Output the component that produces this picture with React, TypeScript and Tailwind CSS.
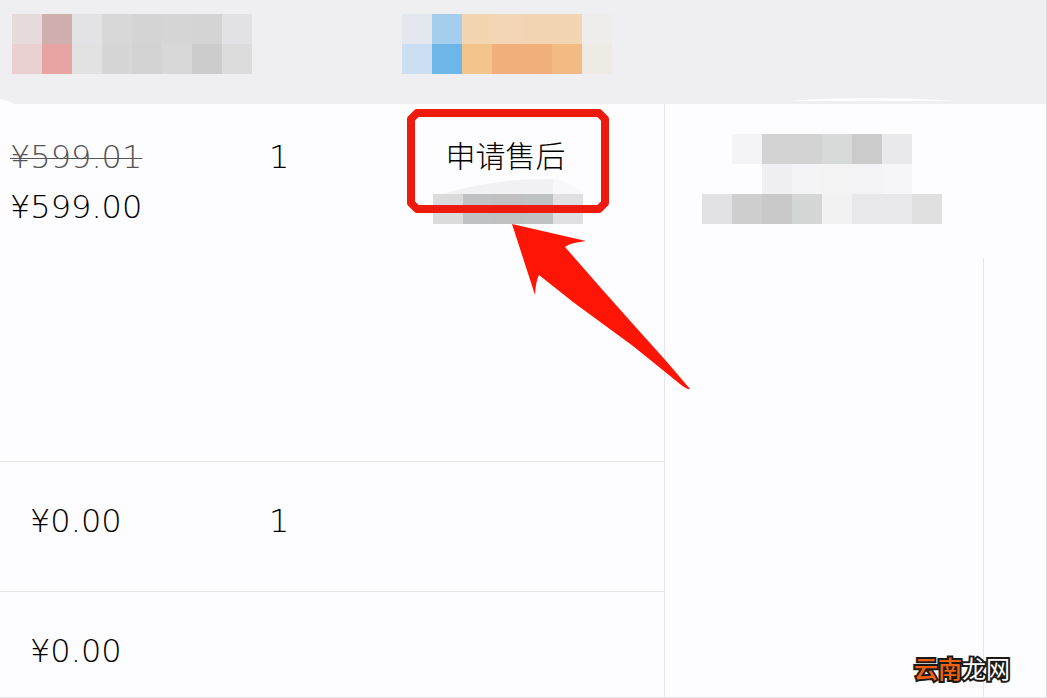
import clsx from "clsx";

// one entry per 30px tile, an empty string leaves a gap
const productTiles = [
  ["bg-[#e6dadb]", "bg-[#cfb0ae]", "bg-[#e3e2e4]", "bg-[#d8d8d9]", "bg-[#d4d4d5]", "bg-[#d6d6d7]", "bg-[#d4d4d5]", "bg-[#e2e2e4]"],
  ["bg-[#ebd0d2]", "bg-[#e7a4a2]", "bg-[#e2e2e3]", "bg-[#d6d6d7]", "bg-[#d3d3d4]", "bg-[#d8d8d9]", "bg-[#cdcccd]", "bg-[#dcdcdd]"],
];

const shopTiles = [
  ["bg-[#e5e7ef]", "bg-[#a4ceed]", "bg-[#f3d5b1]", "bg-[#f3d6b5]", "bg-[#f3d5b3]", "bg-[#f3d5b3]", "bg-[#efedec]"],
  ["bg-[#ccdff2]", "bg-[#6cb6e8]", "bg-[#f2c48c]", "bg-[#f1af7b]", "bg-[#f1af7b]", "bg-[#f3bb83]", "bg-[#eeebe4]"],
];

const statusTiles = [
  ["bg-[#dbdbdc]", "bg-[#bfc1c2]", "bg-[#c1c0c1]", "bg-[#bfc2c3]", "bg-[#e0dfe1]"],
];

const buyerTiles = [
  ["", "bg-[#f4f3f5]", "bg-[#d3d3d4]", "bg-[#d3d3d4]", "bg-[#d8d9d9]", "bg-[#cccbcc]", "bg-[#e9e8ea]", ""],
  ["", "", "bg-[#f0eff1]", "bg-[#f4f3f5]", "bg-[#f3f3f4]", "bg-[#f3f2f4]", "bg-[#f6f6f8]", ""],
  ["bg-[#e2e1e3]", "bg-[#cfcfd0]", "bg-[#c9c9ca]", "bg-[#d5d6d6]", "bg-[#f2f2f3]", "bg-[#e8e7e9]", "bg-[#e8e7e9]", "bg-[#e0e0e1]"],
];

function Mosaic({ rows, className }: { rows: string[][]; className?: string }) {
  return (
    <div className={clsx("w-fit", className)} aria-hidden="true">
      {rows.map((row, i) => (
        <div key={i} className="flex">
          {row.map((color, j) => (
            <span key={j} className={clsx("block size-[30px]", color)} />
          ))}
        </div>
      ))}
    </div>
  );
}

function Highlight() {
  return (
    <>
      <svg className="absolute left-1/2 top-[4px] -translate-x-1/2 overflow-visible pointer-events-none" width="204" height="106" fill="none">
        <path d="M11 5H193L199 11V95L193 101H11L5 95V11Z" stroke="#ed1a0d" strokeWidth="8" strokeLinejoin="round" />
      </svg>
      {/* Arrow, its tip points at the box */}
      <svg className="absolute left-1/2 top-[120px] z-10 ml-[4px] pointer-events-none" width="180" height="168">
        <path d="M0 0L74 17Q57 19 53 23L88 63L120 99L155 138L178 165Q175 166 168 160L121 122L61 78L27 51Q24 56 23 71Z" fill="#fe1505" />
      </svg>
    </>
  );
}

export default function App() {
  return (
    <div className="relative min-h-screen bg-[#fdfcfe] border-r border-[#dddcde] font-['DejaVu_Sans','Noto_Sans_CJK_SC',sans-serif] text-black">
      <header className="relative flex gap-[150px] h-[104px] px-3 pt-[14px] bg-[#efeef0]">
        <Mosaic rows={productTiles} />
        <Mosaic rows={shopTiles} />
        <svg className="absolute left-0 bottom-0" width="14" height="5">
          <path d="M0 0Q8 1 14 5H0Z" fill="#fdfcfe" />
        </svg>
        <svg className="absolute right-[90px] bottom-[2px]" width="170" height="4">
          <path d="M0 3Q40 0 85 0T170 3Z" fill="#fdfcfe" />
        </svg>
      </header>

      <table className="w-full table-fixed border-collapse text-[32px] leading-[50px] font-extralight">
        <colgroup>
          <col className="w-[19%]" />
          <col className="w-[15%]" />
          <col />
          <col className="w-[320px]" />
          <col className="w-[62px]" />
        </colgroup>
        <tbody className="align-top">
          <tr className="h-[357px] border-b border-[#e5e4e7]">
            <td className="pl-[10px] pt-[28px]">
              <del className="block w-fit text-[#555] decoration-1">¥599.01</del>
              <span className="block">¥599.00</span>
            </td>
            <td className="pl-1 pt-[28px] text-center">1</td>
            <td className="pr-1">
              <div className="relative pt-[28px]">
                <a href="#refund" className="block pr-1 text-center text-[30px] font-light leading-[50px]">
                  申请售后
                </a>
                <svg className="block mx-auto -mt-1" width="150" height="16">
                  <path d="M10 16Q62 0 120 1V16Z" fill="#f1f0f2" />
                  <path d="M120 1Q140 4 150 16H120Z" fill="#f8f7f9" />
                </svg>
                <Mosaic rows={statusTiles} className="mx-auto" />
                <Highlight />
              </div>
            </td>
            <td rowSpan={3} className="relative border-l border-b border-[#e5e4e7] pt-[30px] pr-1">
              <Mosaic rows={buyerTiles} className="mx-auto" />
              <span className="absolute right-0 top-[154px] bottom-0 w-px bg-[#e5e4e7]" />
            </td>
            <td rowSpan={3} className="border-b border-[#e5e4e7]" />
          </tr>
          <tr className="h-[130px] border-b border-[#e5e4e7]">
            <td className="pl-[30px] pt-[34px]">¥0.00</td>
            <td className="pl-1 pt-[34px] text-center">1</td>
            <td />
          </tr>
          <tr className="h-[106px] border-b border-[#e5e4e7]">
            <td className="pl-[30px] pt-[34px]">¥0.00</td>
            <td />
            <td />
          </tr>
        </tbody>
      </table>

      <div className="absolute right-[36px] bottom-[12px] font-['Noto_Sans_CJK_SC',sans-serif] text-[24px] leading-[36px] font-normal text-white [paint-order:stroke_fill] [-webkit-text-stroke:4px_#1c1a19]">
        <span className="font-medium text-[#f0610f]">云南</span>龙网
      </div>
    </div>
  );
}
